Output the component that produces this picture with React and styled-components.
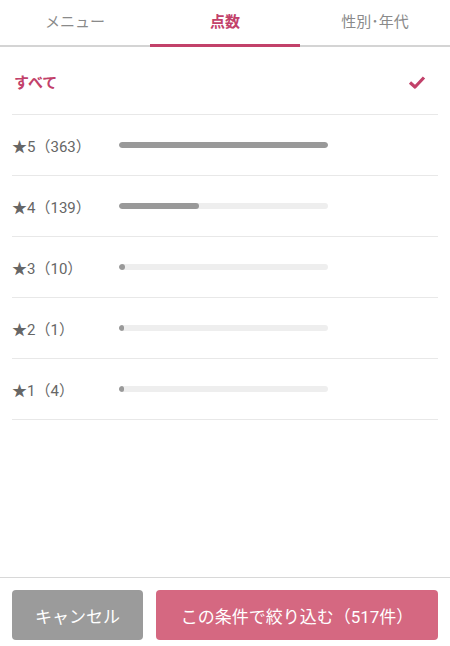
import styled, { createGlobalStyle } from 'styled-components';

const ratings = [
    { star: 5, count: 363 },
    { star: 4, count: 139 },
    { star: 3, count: 10 },
    { star: 2, count: 1 },
    { star: 1, count: 4 },
];
const maxCount = 363;

const App = () => {
    return (
        <Page>
            <GlobalStyle />
            <Tabs>
                <Tab>メニュー</Tab>
                <Tab active>点数</Tab>
                <Tab>性別･年代</Tab>
            </Tabs>
            <List>
                <AllRow>
                    <AllLabel>すべて</AllLabel>
                    <svg width="18" height="14" viewBox="0 0 18 14">
                        <path d="M2 7.5 L7 12 L16 2.5" fill="none" stroke="#c2416a" strokeWidth="3.2" strokeLinejoin="round" />
                    </svg>
                </AllRow>
                {ratings.map((r) => (
                    <Row key={r.star}>
                        <Label>★{r.star}（{r.count}）</Label>
                        <Track>
                            <Fill style={{ width: `${Math.max(5, (r.count / maxCount) * 209)}px` }} />
                        </Track>
                    </Row>
                ))}
            </List>
            <Footer>
                <CancelButton>キャンセル</CancelButton>
                <ApplyButton>この条件で絞り込む（517件）</ApplyButton>
            </Footer>
        </Page>
    );
};

export default App;

const GlobalStyle = createGlobalStyle`
    body {
        margin: 0;
        font-family: Roboto, "Noto Sans CJK JP", sans-serif;
        background: #fff;
    }
`;

const Page = styled.div`
    width: 450px;
    height: 646px;
    display: flex;
    flex-direction: column;
`;

const Tabs = styled.div`
    display: flex;
    height: 45px;
    border-bottom: 2px solid #d4d4d4;
`;

const Tab = styled.div`
    flex: 1;
    display: flex;
    align-items: center;
    justify-content: center;
    font-size: 15px;
    padding-bottom: 6px;
    color: ${(p) => (p.active ? '#c2416a' : '#8a8a8a')};
    font-weight: ${(p) => (p.active ? 700 : 400)};
    box-shadow: ${(p) => (p.active ? 'inset 0 -3px 0 #c2416a' : 'none')};
    margin-bottom: -2px;
`;

const List = styled.div`
    flex: 1;
    padding: 0 12px;
`;

const AllRow = styled.div`
    height: 68px;
    display: flex;
    align-items: center;
    justify-content: space-between;
    padding: 2px 12px 0 2px;
    box-sizing: border-box;
    border-bottom: 1px solid #e8e8e8;
`;

const AllLabel = styled.div`
    font-size: 15px;
    font-weight: 700;
    color: #c2416a;
`;

const Row = styled.div`
    height: 61px;
    display: flex;
    align-items: center;
    box-sizing: border-box;
    border-bottom: 1px solid #e8e8e8;
`;

const Label = styled.div`
    width: 107px;
    font-size: 15px;
    color: #666;
`;

const Track = styled.div`
    width: 209px;
    height: 6px;
    border-radius: 3px;
    background: #eeeeee;
    overflow: hidden;
`;

const Fill = styled.div`
    height: 100%;
    border-radius: 3px;
    background: #999;
`;

const Footer = styled.div`
    display: flex;
    gap: 13px;
    padding: 12px 12px 6px;
    border-top: 1px solid #d8d8d8;
`;

const Button = styled.div`
    height: 50px;
    display: flex;
    align-items: center;
    justify-content: center;
    border-radius: 4px;
    color: #fff;
    font-size: 17px;
`;

const CancelButton = styled(Button)`
    width: 131px;
    background: #9b9b9b;
`;

const ApplyButton = styled(Button)`
    flex: 1;
    background: #d56881;
`;
